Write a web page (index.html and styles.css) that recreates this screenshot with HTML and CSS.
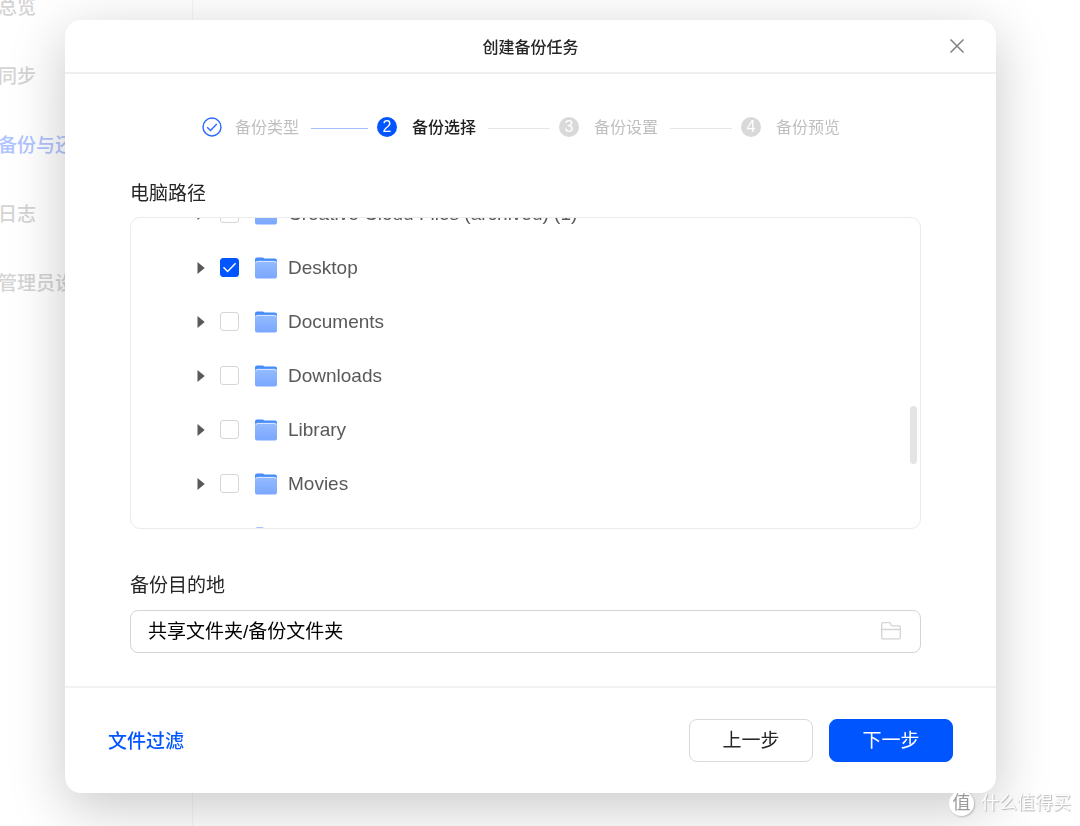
FILE: index.html
```html
<!DOCTYPE html>
<html lang="zh-CN">

<head>
    <meta charset="UTF-8">
    <meta name="viewport" content="width=device-width, initial-scale=1.0">
    <title>创建备份任务</title>
    <link rel="stylesheet" href="styles.css">
</head>

<body>
    <!-- Shared icons -->
    <svg class="sprite" aria-hidden="true">
        <defs>
            <linearGradient id="folderFill" x1="0" y1="0" x2="0" y2="1">
                <stop offset="0" stop-color="#96bcff" />
                <stop offset="1" stop-color="#79a6ff" />
            </linearGradient>
        </defs>
        <symbol id="folder" viewBox="0 0 22 22">
            <path d="M0 2.400Q0 .4 2 .4h5.500q.8 0 1.400.6.6.6 1.400.6H20q2 0 2 2V10H0z" fill="#468dfa" />
            <path d="M0 6q0-2.200 2-2.200h18Q22 3.800 22 6v13.500q0 2-2 2H2q-2 0-2-2z" fill="url(#folderFill)" />
            <path d="M1 6q.2-1.500 1.500-1.500h17q1.300 0 1.500 1.500" fill="none" stroke="#d5e4ff" stroke-width="1" />
        </symbol>
        <symbol id="arrow" viewBox="0 0 8 12">
            <path d="M.5 0l7.200 6L.5 12z" fill="#595959" />
        </symbol>
    </svg>

    <!-- Page behind the dialog -->
    <nav class="sidebar">
        <a href="#">总览</a>
        <a href="#">同步</a>
        <a href="#" class="active">备份与还原</a>
        <a href="#">日志</a>
        <a href="#">管理员设置</a>
    </nav>

    <div class="overlay">
        <div class="dialog" role="dialog" aria-labelledby="dialogTitle">
            <header class="dialog-header">
                <h1 id="dialogTitle">创建备份任务</h1>
                <button type="button" class="close-button" aria-label="关闭">
                    <svg width="14" height="14" viewBox="0 0 14 14">
                        <path d="M.5.5l13 13M13.500.5l-13 13" fill="none" stroke="#808080" stroke-width="1.500" />
                    </svg>
                </button>
            </header>

            <div class="dialog-body">
                <!-- Wizard steps -->
                <ol class="steps">
                    <li class="step done">
                        <svg class="step-icon" width="20" height="20" viewBox="0 0 20 20">
                            <circle cx="10" cy="10" r="9" fill="none" stroke="#2a69ff" stroke-width="1.400" />
                            <path d="M5.200 10.200l3.300 3.300 6.300-6.400" fill="none" stroke="#2a69ff" stroke-width="1.400" />
                        </svg>
                        <span>备份类型</span>
                    </li>
                    <li class="step current">
                        <span class="step-number">2</span>
                        <span>备份选择</span>
                    </li>
                    <li class="step">
                        <span class="step-number">3</span>
                        <span>备份设置</span>
                    </li>
                    <li class="step">
                        <span class="step-number">4</span>
                        <span>备份预览</span>
                    </li>
                </ol>

                <!-- Source path tree -->
                <h2 class="field-title">电脑路径</h2>
                <div class="tree">
                    <ul class="tree-list">
                        <li class="tree-row">
                            <svg class="arrow"><use href="#arrow" /></svg>
                            <input type="checkbox" id="dirCreative">
                            <svg class="folder"><use href="#folder" /></svg>
                            <label for="dirCreative">Creative Cloud Files (archived) (1)</label>
                        </li>
                        <li class="tree-row">
                            <svg class="arrow"><use href="#arrow" /></svg>
                            <input type="checkbox" id="dirDesktop" checked>
                            <svg class="folder"><use href="#folder" /></svg>
                            <label for="dirDesktop">Desktop</label>
                        </li>
                        <li class="tree-row">
                            <svg class="arrow"><use href="#arrow" /></svg>
                            <input type="checkbox" id="dirDocuments">
                            <svg class="folder"><use href="#folder" /></svg>
                            <label for="dirDocuments">Documents</label>
                        </li>
                        <li class="tree-row">
                            <svg class="arrow"><use href="#arrow" /></svg>
                            <input type="checkbox" id="dirDownloads">
                            <svg class="folder"><use href="#folder" /></svg>
                            <label for="dirDownloads">Downloads</label>
                        </li>
                        <li class="tree-row">
                            <svg class="arrow"><use href="#arrow" /></svg>
                            <input type="checkbox" id="dirLibrary">
                            <svg class="folder"><use href="#folder" /></svg>
                            <label for="dirLibrary">Library</label>
                        </li>
                        <li class="tree-row">
                            <svg class="arrow"><use href="#arrow" /></svg>
                            <input type="checkbox" id="dirMovies">
                            <svg class="folder"><use href="#folder" /></svg>
                            <label for="dirMovies">Movies</label>
                        </li>
                        <li class="tree-row">
                            <svg class="arrow"><use href="#arrow" /></svg>
                            <input type="checkbox" id="dirMusic">
                            <svg class="folder"><use href="#folder" /></svg>
                            <label for="dirMusic">Music</label>
                        </li>
                    </ul>
                    <div class="scroll-thumb"></div>
                </div>

                <!-- Destination -->
                <label class="field-title" for="destination">备份目的地</label>
                <div class="path-field">
                    <input type="text" id="destination" value="共享文件夹/备份文件夹">
                    <button type="button" class="browse-button" aria-label="选择文件夹">
                        <svg width="20" height="18" viewBox="0 0 20 18">
                            <path d="M.7 2q0-1.300 1.300-1.300h6.300q.7 0 1 .6l1 2q.3.600 1 .600h6.700q1.300 0 1.300 1.300V15.500q0 1.300-1.300 1.300H2q-1.300 0-1.300-1.300zM.7 7.500h18.600" fill="none" stroke="#d4d4d4" stroke-width="1.300" />
                        </svg>
                    </button>
                </div>
            </div>

            <footer class="dialog-footer">
                <a href="#" class="filter-link">文件过滤</a>
                <button type="button" class="button">上一步</button>
                <button type="button" class="button primary">下一步</button>
            </footer>
        </div>
    </div>

    <div class="watermark">
        <span class="watermark-badge">值</span>
        <span>什么值得买</span>
    </div>
</body>

</html>
```

FILE: styles.css
```css
* {
    box-sizing: border-box;
}

body {
    margin: 0;
    min-height: 100vh;
    display: flex;
    overflow: hidden;
    background-color: #fff;
    font-family: "Liberation Sans", "Noto Sans CJK SC", sans-serif;
    font-size: 19px;
    color: #262626;
}

button,
input {
    font: inherit;
    color: inherit;
    margin: 0;
}

button {
    cursor: pointer;
}

ol,
ul {
    list-style: none;
    margin: 0;
    padding: 0;
}

.sprite {
    position: absolute;
    width: 0;
    height: 0;
}

/* Sidebar, scrolled partly out of view */
.sidebar {
    width: 195px;
    margin: -27px 0 0 -2px;
    border-right: 1px solid #f5f5f5;
}

.sidebar a {
    display: block;
    line-height: 69px;
    font-weight: 500;
    color: #d4d4d4;
    text-decoration: none;
}

.sidebar a.active {
    color: #b0c4ff;
}

/* Dialog */
.overlay {
    position: fixed;
    inset: 0;
    display: flex;
    padding: 20px 84px 33px 65px;
}

.dialog {
    flex: 1;
    display: flex;
    flex-direction: column;
    background-color: #fff;
    border-radius: 16px;
    box-shadow: 0 14px 56px rgba(0, 0, 0, 0.22);
}

.dialog-header {
    display: grid;
    grid-template-columns: 1fr auto 1fr;
    align-items: center;
    height: 54px;
    padding: 0 32px;
    border-bottom: 2px solid #efefef;
}

.dialog-header h1 {
    grid-column: 2;
    margin: 0;
    font-size: 16px;
    font-weight: 500;
}

.close-button {
    display: flex;
    justify-self: end;
    padding: 0;
    background: none;
    border: none;
}

.dialog-body {
    flex: 1;
    display: flex;
    flex-direction: column;
    min-height: 0;
    padding: 42px 75px 33px 65px;
}

/* Steps */
.steps {
    display: flex;
    padding-left: 72px;
    font-size: 16px;
    line-height: 24px;
    color: #bfbfbf;
}

.step {
    display: flex;
    align-items: center;
    white-space: nowrap;
}

.step::after {
    content: "";
    width: 62px;
    height: 1px;
    margin: 0 9px 0 12px;
    background-color: #e6e6e6;
}

.step:last-child::after {
    display: none;
}

.step.done::after {
    width: 57px;
    background-color: #a6bfff;
}

.step.current {
    color: #1f1f1f;
    font-weight: 500;
}

.step-icon {
    margin: 0 13px 2px 0;
}

.step-number {
    width: 20px;
    height: 20px;
    margin: 0 15px 2px 0;
    border-radius: 50%;
    background-color: #d9d9d9;
    color: #fff;
    font-weight: normal;
    line-height: 20px;
    text-align: center;
}

.step.current .step-number {
    background-color: #0055ff;
}

.field-title {
    margin: 40px 0 9px;
    font-size: 19px;
    font-weight: normal;
    line-height: 28px;
}

/* Folder tree */
.tree {
    position: relative;
    flex: 1;
    min-height: 0;
    overflow: hidden;
    border: 1px solid #ebebeb;
    border-radius: 10px;
}

.tree + .field-title {
    margin: 43px 0 10px;
}

.tree-list {
    margin-top: -31px;
}

.tree-row {
    display: flex;
    align-items: center;
    height: 54px;
    padding-left: 66px;
    color: #595959;
}

.arrow {
    width: 8px;
    height: 12px;
    margin-right: 15px;
}

.folder {
    width: 22px;
    height: 22px;
    margin: 0 11px 0 16px;
}

.tree-row input {
    appearance: none;
    width: 19px;
    height: 19px;
    border: 1px solid #d6d6d6;
    border-radius: 3px;
    margin-bottom: 1px;
    background-color: #fff;
}

.tree-row input:checked {
    border-color: #0055ff;
    background: #0055ff url("data:image/svg+xml,%3Csvg xmlns='http://www.w3.org/2000/svg' viewBox='0 0 17 17'%3E%3Cpath d='M2.500 8.300l4.100 4.200 8-8.300' fill='none' stroke='white' stroke-width='1.500'/%3E%3C/svg%3E") center / 17px no-repeat;
}

.scroll-thumb {
    position: absolute;
    top: 188px;
    right: 3px;
    width: 7px;
    height: 58px;
    border-radius: 4px;
    background-color: #e4e4e4;
}

/* Destination field */
.path-field {
    display: flex;
    align-items: center;
    height: 43px;
    padding: 0 19px 2px 17px;
    border: 1px solid #d4d4d4;
    border-radius: 8px;
    color: #000;
}

.path-field input {
    flex: 1;
    min-width: 0;
    padding: 0 0 2px;
    border: none;
    outline: none;
    background: none;
}

.browse-button {
    display: flex;
    padding: 0;
    background: none;
    border: none;
}

/* Footer */
.dialog-footer {
    display: flex;
    align-items: center;
    gap: 16px;
    padding: 31px 43px;
    border-top: 2px solid #f2f2f2;
}

.filter-link {
    margin-right: auto;
    padding-bottom: 2px;
    color: #0055ff;
    font-weight: 500;
    text-decoration: none;
}

.button {
    width: 124px;
    height: 43px;
    padding: 0 0 4px;
    border: 1px solid #d9d9d9;
    border-radius: 8px;
    background-color: #fff;
}

.button.primary {
    border-color: #0055ff;
    background-color: #0055ff;
    color: #fff;
}

.watermark {
    position: fixed;
    right: 9px;
    bottom: 10px;
    display: flex;
    align-items: center;
    gap: 7px;
    color: #fff;
    font-size: 18px;
    line-height: 25px;
    text-shadow: 1px 1px 1px #b8b8b8, 0 0 1px #d0d0d0;
}

.watermark-badge {
    width: 25px;
    height: 25px;
    border-radius: 50%;
    background-color: #fff;
    box-shadow: 1px 1px 2px #b8b8b8;
    color: #999;
    text-align: center;
    text-shadow: none;
}
```
